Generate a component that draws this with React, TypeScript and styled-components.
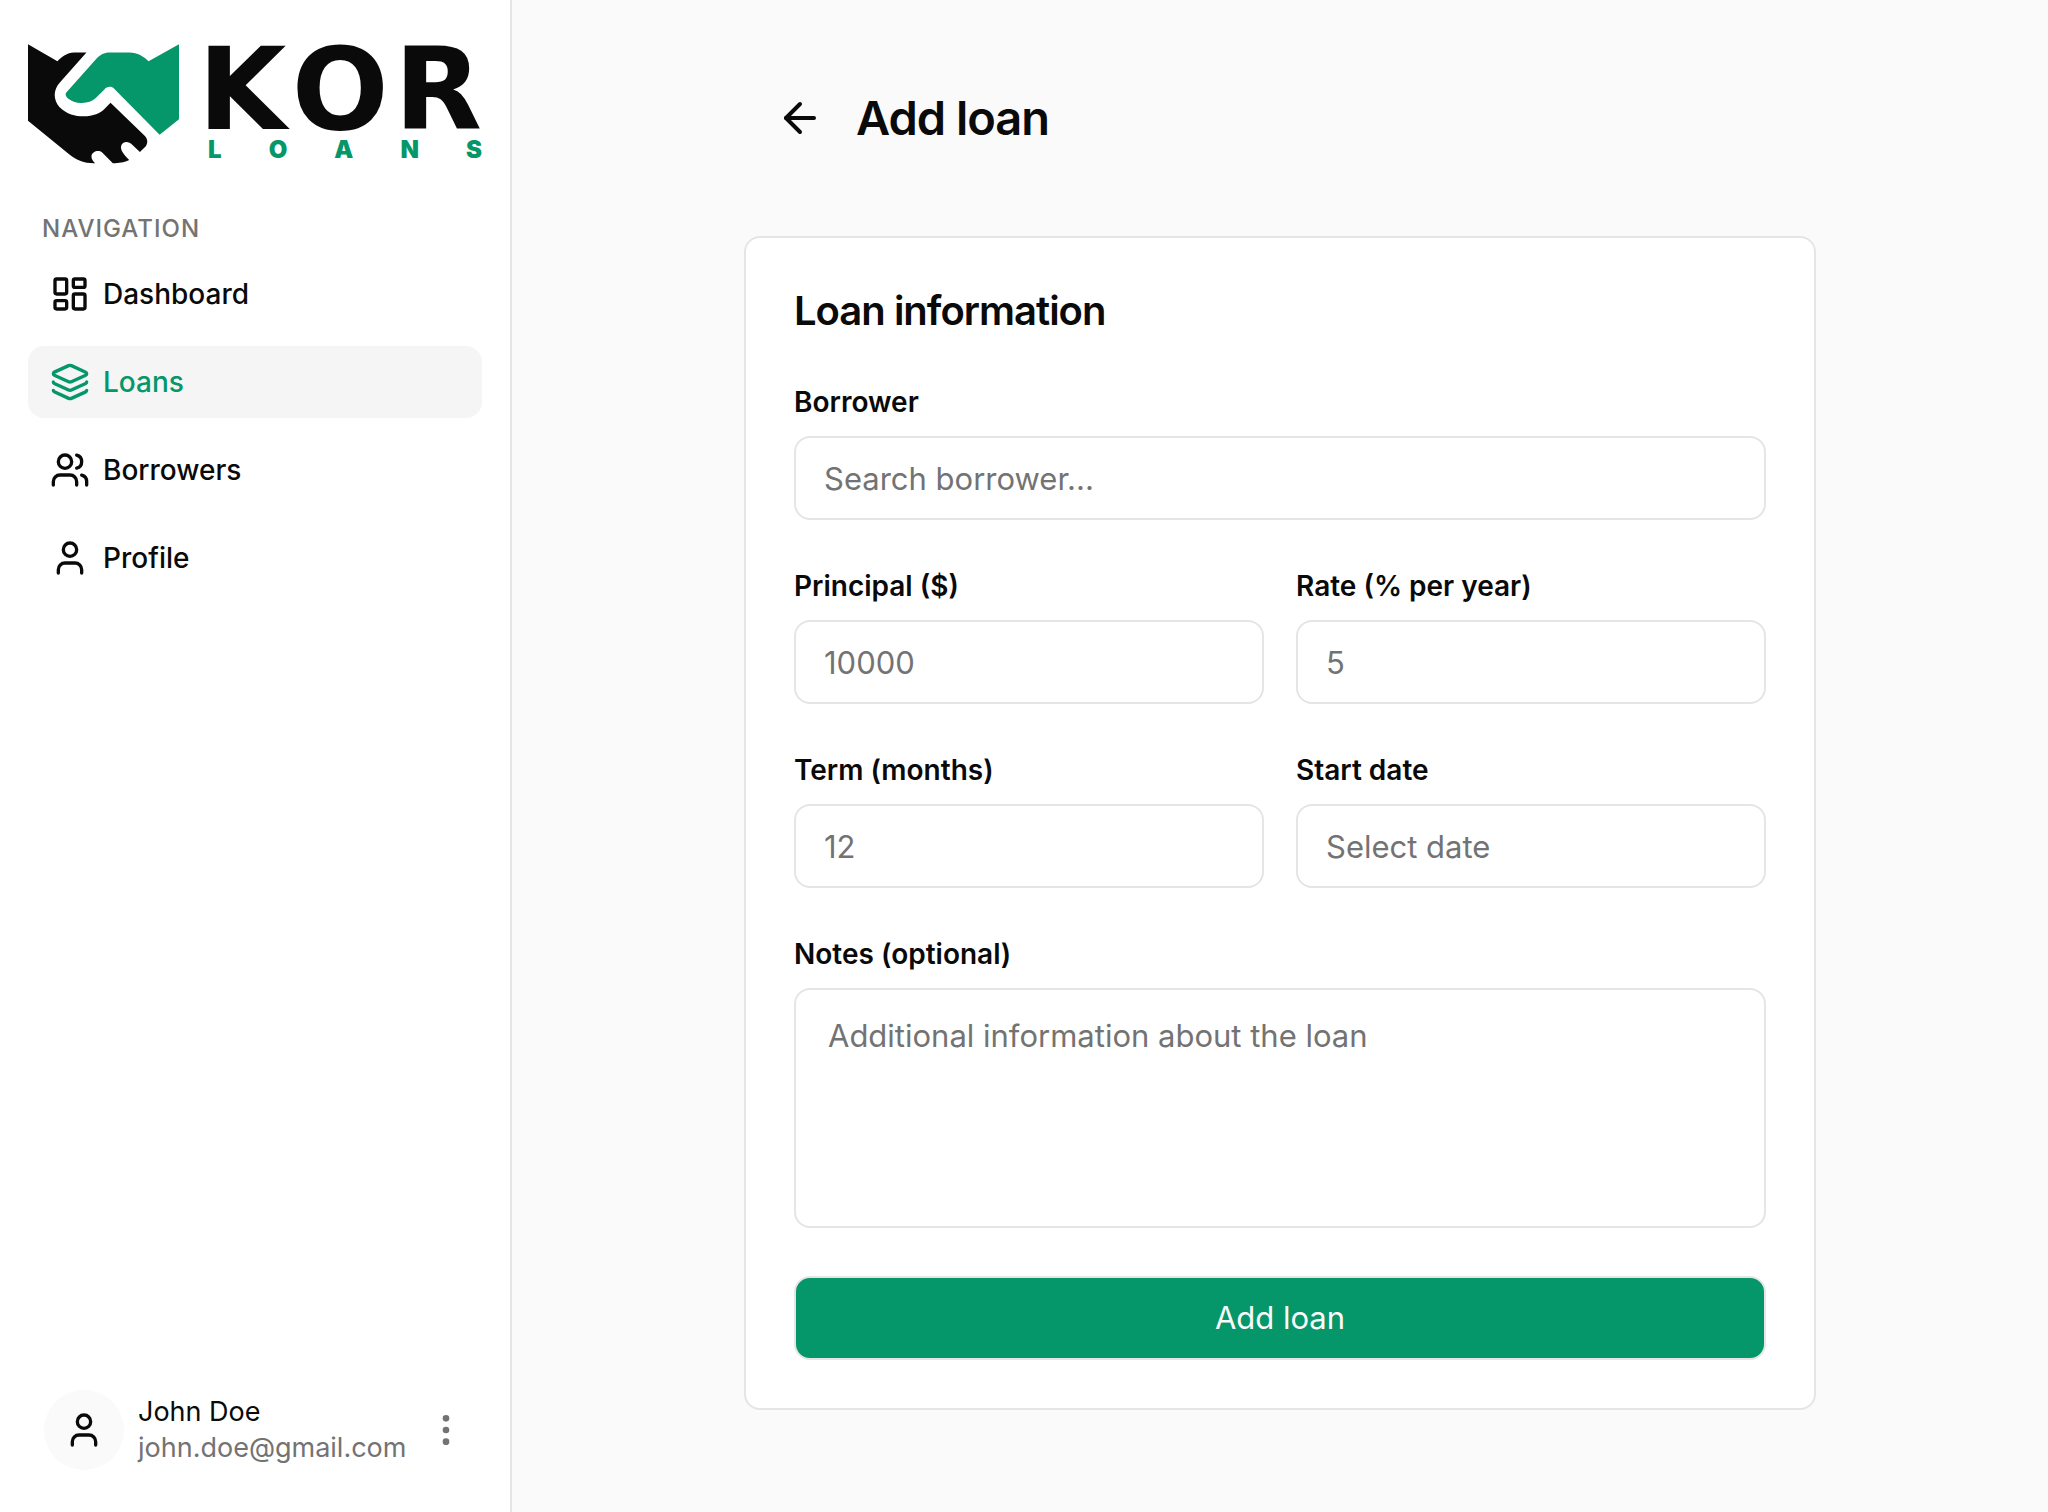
import React from "react";
import styled, { createGlobalStyle } from "styled-components";
import {
  ArrowLeft,
  EllipsisVertical,
  Layers,
  LayoutDashboard,
  User,
  Users,
} from "lucide-react";

const color = {
  ink: "#0a0a0a",
  muted: "#737373",
  line: "#e5e5e5",
  page: "#fafafa",
  active: "#f5f5f5",
  brand: "#059669",
};

const GlobalStyle = createGlobalStyle`
  *, *::before, *::after { box-sizing: border-box; }
  body {
    margin: 0;
    background: ${color.page};
    color: ${color.ink};
    font-family: Inter, "Liberation Sans", sans-serif;
    font-size: 28px;
    line-height: 36px;
    -webkit-font-smoothing: antialiased;
  }
  button, input, textarea { font: inherit; color: inherit; }
`;

const Shell = styled.div`
  display: grid;
  grid-template-columns: 512px minmax(0, 1fr);
  min-height: 100vh;
`;

const Sidebar = styled.aside`
  position: sticky;
  top: 0;
  display: flex;
  flex-direction: column;
  height: 100vh;
  padding: 44px 28px 42px;
  background: #fff;
  border-right: 2px solid ${color.line};
`;

const Brand = styled.a`
  display: flex;
  justify-content: space-between;
  height: 120px;
  color: ${color.ink};
  text-decoration: none;
`;

const Mark = styled.svg`
  width: 151px;
  height: 120px;
`;

const Wordmark = styled.span`
  display: flex;
  flex-direction: column;
  width: 274px;
`;

const BrandName = styled.span`
  display: flex;
  justify-content: space-between;
  margin-left: -10px;
  font-family: "DejaVu Sans", sans-serif;
  font-size: 114px;
  font-weight: 700;
  line-height: 92px;
`;

const BrandTag = styled.span`
  display: flex;
  justify-content: space-between;
  color: ${color.brand};
  font-size: 24px;
  font-weight: 900;
  line-height: 28px;
`;

const NavLabel = styled.h2`
  margin: 48px 0 12px;
  padding: 0 14px;
  color: ${color.muted};
  font-size: 24px;
  font-weight: 500;
  line-height: 34px;
  letter-spacing: 1px;
`;

const NavList = styled.nav`
  display: flex;
  flex-direction: column;
  gap: 16px;
`;

const NavItem = styled.a<{ $active?: boolean }>`
  display: flex;
  align-items: center;
  gap: 13px;
  height: 72px;
  padding: 0 22px;
  border-radius: 16px;
  background: ${(p) => (p.$active ? color.active : "transparent")};
  color: ${(p) => (p.$active ? color.brand : color.ink)};
  font-weight: 500;
  text-decoration: none;
`;

const Account = styled.div`
  display: flex;
  align-items: center;
  gap: 14px;
  margin-top: auto;
  padding: 0 16px;
`;

const Avatar = styled.div`
  display: grid;
  place-items: center;
  width: 80px;
  height: 80px;
  border-radius: 50%;
  background: ${color.page};
`;

const Identity = styled.div`
  display: flex;
  flex: 1;
  flex-direction: column;
  min-width: 0;
  font-size: 27px;
`;

const Email = styled.span`
  color: ${color.muted};
`;

const IconButton = styled.button`
  display: flex;
  padding: 0;
  border: 0;
  background: none;
  color: ${(p) => p.color ?? color.ink};
  cursor: pointer;
`;

const Main = styled.main`
  width: 100%;
  max-width: 1072px;
  margin: 0 auto;
  padding-bottom: 64px;
`;

const PageHeader = styled.header`
  display: flex;
  align-items: center;
  gap: 32px;
  padding: 88px 32px;
`;

const PageTitle = styled.h1`
  margin: 0;
  font-size: 47px;
  font-weight: 600;
  line-height: 60px;
  letter-spacing: -1px;
`;

const Card = styled.form`
  display: flex;
  flex-direction: column;
  gap: 48px;
  padding: 48px;
  border: 2px solid ${color.line};
  border-radius: 16px;
  background: #fff;
`;

const CardTitle = styled.h2`
  margin: 0;
  font-size: 40px;
  font-weight: 600;
  line-height: 50px;
  letter-spacing: -1px;
`;

const FieldRow = styled.div`
  display: grid;
  grid-template-columns: repeat(2, minmax(0, 1fr));
  gap: 32px;
`;

const Field = styled.div`
  display: flex;
  flex-direction: column;
  gap: 16px;
`;

const Label = styled.label`
  font-weight: 600;
`;

const TextInput = styled.input`
  width: 100%;
  height: 84px;
  padding: 0 28px;
  border: 2px solid ${color.line};
  border-radius: 16px;
  outline: none;
  background: #fff;
  font-size: 31px;
  &::placeholder { color: ${color.muted}; opacity: 1; }
`;

const NotesInput = styled.textarea`
  display: block;
  width: 100%;
  height: 240px;
  padding: 22px 32px;
  border: 2px solid ${color.line};
  border-radius: 16px;
  outline: none;
  resize: none;
  background: #fff;
  font-size: 31px;
  line-height: 48px;
  &::placeholder { color: ${color.muted}; opacity: 1; }
`;

const SubmitButton = styled.button`
  height: 84px;
  border: 2px solid ${color.line};
  border-radius: 16px;
  background: ${color.brand};
  color: #fafafa;
  font-size: 31px;
  cursor: pointer;
`;

const navItems = [
  { label: "Dashboard", icon: LayoutDashboard },
  { label: "Loans", icon: Layers, active: true },
  { label: "Borrowers", icon: Users },
  { label: "Profile", icon: User },
];

function HandshakeMark() {
  return (
    <Mark viewBox="84 74 452 358" aria-hidden="true">
      <path
        fill={color.ink}
        d="M84 74 172 125C186 111 200 100 222 99H259L180 188C158 212 160 240 178 262C200 284 225 290 250 290C280 290 300 281 312 269L331 249L434 349C443 358 443 372 436 380L419 397L396 375C384 362 366 366 363 378C360 390 368 402 387 421C375 427 360 431 338 430L306 398C294 388 276 396 274 408C273 418 279 425 285 430C255 431 230 422 208 404L84 303Z"
      />
      <path
        fill={color.brand}
        d="M536 74 445 125C430 111 412 99 388 99H328C312 99 300 106 290 116L198 219C194 226 200 234 206 238C218 247 232 251 246 250C262 250 276 245 286 236L312 210C320 200 334 199 342 207L478 345L536 299Z"
      />
    </Mark>
  );
}

function SpreadLetters({ text }: { text: string }) {
  return (
    <>
      {text.split("").map((letter) => (
        <span key={letter}>{letter}</span>
      ))}
    </>
  );
}

function TextField({ id, label, hint }: { id: string; label: string; hint: string }) {
  return (
    <Field>
      <Label htmlFor={id}>{label}</Label>
      <TextInput id={id} name={id} type="text" placeholder={hint} />
    </Field>
  );
}

export default function App() {
  return (
    <>
      <GlobalStyle />
      <Shell>
        <Sidebar>
          <Brand href="#">
            <HandshakeMark />
            <Wordmark>
              <BrandName>
                <SpreadLetters text="KOR" />
              </BrandName>
              <BrandTag>
                <SpreadLetters text="LOANS" />
              </BrandTag>
            </Wordmark>
          </Brand>
          <NavLabel>NAVIGATION</NavLabel>
          <NavList>
            {navItems.map(({ label, icon: Icon, active }) => (
              <NavItem key={label} href="#" $active={active}>
                <Icon size={40} />
                {label}
              </NavItem>
            ))}
          </NavList>
          <Account>
            <Avatar>
              <User size={40} />
            </Avatar>
            <Identity>
              <span>John Doe</span>
              <Email>john.doe@gmail.com</Email>
            </Identity>
            <IconButton type="button" aria-label="Account options" color={color.muted}>
              <EllipsisVertical size={40} />
            </IconButton>
          </Account>
        </Sidebar>
        <Main>
          <PageHeader>
            <IconButton type="button" aria-label="Back">
              <ArrowLeft size={48} />
            </IconButton>
            <PageTitle>Add loan</PageTitle>
          </PageHeader>
          <Card onSubmit={(e) => e.preventDefault()}>
            <CardTitle>Loan information</CardTitle>
            <TextField id="borrower" label="Borrower" hint="Search borrower..." />
            <FieldRow>
              <TextField id="principal" label="Principal ($)" hint="10000" />
              <TextField id="rate" label="Rate (% per year)" hint="5" />
            </FieldRow>
            <FieldRow>
              <TextField id="term" label="Term (months)" hint="12" />
              <TextField id="start" label="Start date" hint="Select date" />
            </FieldRow>
            <Field>
              <Label htmlFor="notes">Notes (optional)</Label>
              <NotesInput id="notes" name="notes" placeholder="Additional information about the loan" />
            </Field>
            <SubmitButton type="submit">Add loan</SubmitButton>
          </Card>
        </Main>
      </Shell>
    </>
  );
}
